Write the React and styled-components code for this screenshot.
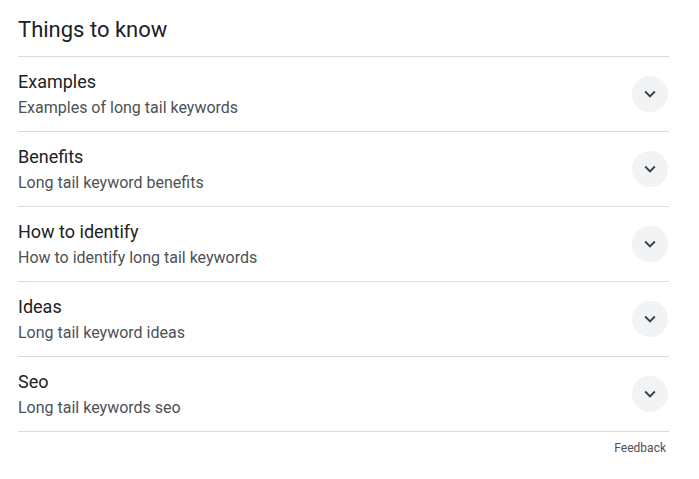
import styled, { createGlobalStyle } from "styled-components";

const GlobalStyle = createGlobalStyle`
  body {
    margin: 0;
    background: #fff;
    font-family: Roboto, "Liberation Sans", Arial, sans-serif;
  }
`;

const items = [
  { title: "Examples", sub: "Examples of long tail keywords" },
  { title: "Benefits", sub: "Long tail keyword benefits" },
  { title: "How to identify", sub: "How to identify long tail keywords" },
  { title: "Ideas", sub: "Long tail keyword ideas" },
  { title: "Seo", sub: "Long tail keywords seo" },
];

const App = () => {
  return (
    <>
      <GlobalStyle />
      <Container>
        <Heading>Things to know</Heading>
        <List>
          {items.map((item) => (
            <Row key={item.title}>
              <Text>
                <Title>{item.title}</Title>
                <Sub>{item.sub}</Sub>
              </Text>
              <Chevron>
                <svg width="22" height="22" viewBox="0 0 24 24">
                  <path
                    d="M7.41 8.59 12 13.17l4.59-4.58L18 10l-6 6-6-6z"
                    fill="#3c4043"
                  />
                </svg>
              </Chevron>
            </Row>
          ))}
        </List>
        <Footer>
          <FeedbackLink>Feedback</FeedbackLink>
        </Footer>
      </Container>
    </>
  );
};

const Container = styled.div`
  width: 651px;
  padding: 0 0 0 18px;
`;

const Heading = styled.h2`
  margin: 0;
  height: 57px;
  box-sizing: border-box;
  padding-top: 16px;
  font-size: 22px;
  font-weight: 400;
  color: #202124;
  line-height: 28px;
  border-bottom: 1px solid #dadce0;
`;

const List = styled.div`
  display: flex;
  flex-direction: column;
`;

const Row = styled.div`
  display: flex;
  align-items: center;
  justify-content: space-between;
  height: 75px;
  box-sizing: border-box;
  border-bottom: 1px solid #dadce0;
`;

const Text = styled.div`
  display: flex;
  flex-direction: column;
  gap: 3px;
`;

const Title = styled.div`
  font-size: 18px;
  line-height: 24px;
  color: #202124;
`;

const Sub = styled.div`
  font-size: 16px;
  line-height: 22px;
  color: #4d5156;
`;

const Chevron = styled.div`
  width: 36px;
  height: 36px;
  border-radius: 50%;
  background: #f1f3f4;
  display: flex;
  align-items: center;
  justify-content: center;
  margin-right: 1px;
`;

const Footer = styled.div`
  display: flex;
  justify-content: flex-end;
  padding-top: 8px;
`;

const FeedbackLink = styled.span`
  font-size: 12px;
  line-height: 16px;
  color: #4d5156;
  margin-right: 3px;
`;

export default App;
